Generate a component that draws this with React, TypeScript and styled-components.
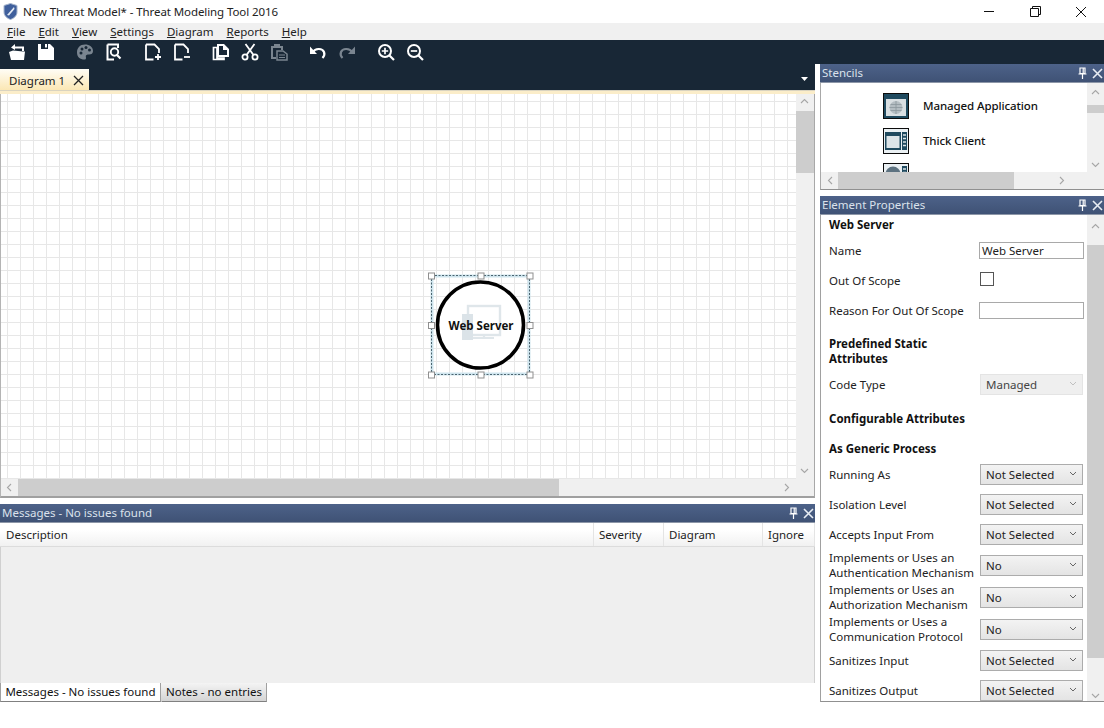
import React from "react";
import styled, { createGlobalStyle } from "styled-components";

const Global = createGlobalStyle`
  html, body { margin: 0; padding: 0; background: #fff; }
  body { font-family: "Noto Sans", "Open Sans", sans-serif; font-size: 11.5px; color: #111; }
`;

const Page = styled.div`
  width: 1104px; height: 728px; overflow: hidden; background: #fff;
  display: flex; flex-direction: column;
`;
const TitleBar = styled.div`
  height: 23px; display: flex; align-items: center; padding-left: 3px; background: #fff;
`;
const TitleText = styled.span`
  margin-left: 5px; font-size: 11.5px; letter-spacing: -0.09px; color: #222; flex: 1;
`;
const WinBtn = styled.div`
  width: 46px; height: 23px; display: flex; align-items: center; justify-content: center;
`;
const MenuBar = styled.div`
  height: 17px; background: #f0f0f0; display: flex; align-items: center; padding-left: 7px; gap: 13px;
`;
const MenuItem = styled.span`
  display: inline-block; font-size: 11.5px; color: #222;
  &::first-letter { text-decoration: underline; }
`;
const Toolbar = styled.div`
  height: 24px; background: #182736; display: flex; align-items: center; padding-left: 2px; gap: 10px;
`;
const ToolGroup = styled.div`display: flex;`;
const ToolBtn = styled.div`
  width: 29px; height: 24px; display: flex; align-items: center; justify-content: center;
`;
const Main = styled.div`
  flex: 1; display: flex; min-height: 0;
`;
const LeftCol = styled.div`
  width: 815px; display: flex; flex-direction: column; margin-right: 5px;
`;
const TabStrip = styled.div`
  height: 26px; background: #182736; display: flex; align-items: flex-end; position: relative;
`;
const DocTab = styled.div`
  width: 89px; height: 21px; box-sizing: border-box; padding: 1px 5px 0 9px;
  background: linear-gradient(#fffdf6, #fbe7b4); display: flex; align-items: center; justify-content: space-between;
  color: #222;
`;
const TabMenu = styled.div`
  position: absolute; right: 7px; top: 13px; display: flex;
`;
const CreamStrip = styled.div`
  height: 4px; background: #fbedc9; border-top: 1px solid #d9d3c0; box-sizing: border-box;
`;
const CanvasFrame = styled.div`
  height: 404px; box-sizing: border-box; border-left: 1px solid #b4b4b4; border-right: 1px solid #a8a8a8; border-bottom: 2px solid #a0a0a0;
  display: grid; grid-template-columns: 1fr 18px; grid-template-rows: 1fr 17px; background: #f0f0f0;
`;
const Canvas = styled.div`
  position: relative; overflow: hidden; background-color: #fff;
  background-image: linear-gradient(#e7e7e7 1px, transparent 1px), linear-gradient(90deg, #e7e7e7 1px, transparent 1px);
  background-size: 13px 13px; background-position: 6px 7px;
`;
const NodeBox = styled.div`
  position: absolute; left: 425px; top: 177px; width: 110px; height: 110px;
`;
const NodeLabel = styled.div`
  position: absolute; left: 0; right: 0; top: 47px; text-align: center; font-weight: 700; font-size: 11.5px; color: #111; line-height: 16px;
`;
const VTrack = styled.div<{ $thumbTop: number; $thumbHeight: number }>`
  position: relative; background: #f0f0f0;
  &::before {
    content: ""; position: absolute; left: 0; right: 0; top: ${(p) => p.$thumbTop}px; height: ${(p) => p.$thumbHeight}px; background: #cdcdcd;
  }
`;
const HTrack = styled.div<{ $thumbLeft: number; $thumbWidth: number }>`
  position: relative; background: #f0f0f0;
  &::before {
    content: ""; position: absolute; top: 0; bottom: 0; left: ${(p) => p.$thumbLeft}px; width: ${(p) => p.$thumbWidth}px; background: #cdcdcd;
  }
`;
const Arrow = styled.svg<{ $x?: number; $y?: number; $r?: number; $b?: number }>`
  position: absolute; width: 9px; height: 9px;
  ${(p) => (p.$x !== undefined ? `left:${p.$x}px;` : "")}
  ${(p) => (p.$y !== undefined ? `top:${p.$y}px;` : "")}
  ${(p) => (p.$r !== undefined ? `right:${p.$r}px;` : "")}
  ${(p) => (p.$b !== undefined ? `bottom:${p.$b}px;` : "")}
`;
const Corner = styled.div`background: #f0f0f0;`;
const PanelHeader = styled.div`
  height: 19px; flex: none; background: linear-gradient(#4d6289, #3f5275); display: flex; align-items: center;
  color: #dbe2ec; font-size: 11.5px; padding-left: 2px; border-bottom: 1px solid #8d97a8; box-sizing: border-box;
`;
const HeaderTitle = styled.span`flex: 1; padding-bottom: 2px;`;
const HeaderIcons = styled.div`display: flex; align-items: center; gap: 5px; padding-right: 1px;`;
const GapSix = styled.div`height: 6px; flex: none;`;
const Columns = styled.div`
  height: 24px; display: flex; background: linear-gradient(#fff 30%, #f1f1f1); border-bottom: 1px solid #dcdcdc; box-sizing: border-box;
`;
const Col = styled.div<{ $w?: number }>`
  ${(p) => (p.$w ? `width:${p.$w}px;` : "flex:1;")}
  box-sizing: border-box; padding-left: ${(p) => (p.$w ? 5 : 6)}px; display: flex; align-items: center; color: #222; border-right: 1px solid #e4e4e4;
`;
const MsgBody = styled.div`
  height: 136px; background: #efefef; border-left: 1px solid #d0d0d0; border-right: 1px solid #d0d0d0; box-sizing: border-box;
`;
const BottomTabs = styled.div`
  display: flex; height: 19px;
`;
const BottomTab = styled.div<{ $active?: boolean }>`
  box-sizing: border-box; height: 19px; display: flex; align-items: center; justify-content: center; padding-bottom: 2px;
  width: ${(p) => (p.$active ? 161 : 106)}px;
  background: ${(p) => (p.$active ? "#fff" : "linear-gradient(#f4f4f4, #d4d4d4)")};
  border-bottom: 1px solid #808080; border-left: 1px solid ${(p) => (p.$active ? "#a0a0a0" : "transparent")};
  border-right: 1px solid #a0a0a0; color: #111;
`;
const RightCol = styled.div`
  width: 284px; display: flex; flex-direction: column;
`;
const StencilFrame = styled.div`
  height: 107px; box-sizing: border-box; flex: none; border-left: 1px solid #a8a8a8; border-bottom: 1px solid #909090;
  display: grid; grid-template-columns: 1fr 17px; grid-template-rows: 89px 17px;
`;
const StencilList = styled.div`
  overflow: hidden; padding: 10px 0 0 62px; display: flex; flex-direction: column; gap: 9px; background: #fff;
`;
const StencilRow = styled.div`
  display: flex; align-items: center; gap: 14px; height: 26px; flex: none; font-size: 11.5px; font-weight: 500; letter-spacing: -0.1px; color: #111;
`;
const StencilName = styled.span`
  padding-bottom: 2px;
`;
const PropsFrame = styled.div`
  position: relative; height: 487px; flex: none; box-sizing: border-box; border-left: 1px solid #a0a0a0; border-bottom: 1px solid #909090;
  display: grid; grid-template-columns: 1fr 17px; overflow: hidden;
`;
const PropsBody = styled.div`
  overflow: hidden; padding-left: 8px; background: #fff;
`;
const PropsInner = styled.div`
  margin-top: -1px;
`;
const SectionTitle = styled.div<{ $h?: number; $mt?: number }>`
  height: ${(p) => p.$h ?? 22}px; margin-top: ${(p) => p.$mt ?? 8}px; display: flex; align-items: center; font-weight: 700; line-height: 15px; color: #111; width: 150px;
`;
const PropRow = styled.div<{ $h?: number; $mt?: number }>`
  height: ${(p) => p.$h ?? 30}px; margin-top: ${(p) => p.$mt ?? 0}px; display: grid; grid-template-columns: 151px 1fr; align-items: center; padding-right: 3px;
`;
const PropLabel = styled.div`
  color: #222; line-height: 15px; white-space: nowrap;
`;
const TextField = styled.div`
  width: 105px; height: 17px; box-sizing: border-box; border: 1px solid #a9a9a9; padding-left: 2px; display: flex; align-items: center; background: #fff; color: #222; margin-left: -1px;
`;
const Check = styled.div`
  width: 14px; height: 14px; box-sizing: border-box; border: 1px solid #555; background: #fff; margin: -2px 0 0 0;
`;
const Select = styled.div<{ $disabled?: boolean }>`
  width: 103px; height: 21px; box-sizing: border-box; display: flex; align-items: center; justify-content: space-between; padding: 0 5px;
  color: ${(p) => (p.$disabled ? "#444" : "#222")};
  background: ${(p) => (p.$disabled ? "#efefef" : "linear-gradient(#f3f3f3, #e4e4e4)")};
  border: 1px solid ${(p) => (p.$disabled ? "#e4e4e4" : "#acacac")};
`;

const Chevron = ({ d = "M1 6 L4.5 2.5 L8 6", c = "#a6a6a6", x, y, r, b }: { d?: string; c?: string; x?: number; y?: number; r?: number; b?: number }) => (
  <Arrow viewBox="0 0 9 9" $x={x} $y={y} $r={r} $b={b}><path d={d} fill="none" stroke={c} strokeWidth="1.1" /></Arrow>
);
const UP = "M1 6 L4.5 2.5 L8 6";
const DOWN = "M1 3 L4.5 6.5 L8 3";
const LEFT = "M6 1 L2.5 4.5 L6 8";
const RIGHT = "M3 1 L6.5 4.5 L3 8";

const W = "#fff";
const G = "#7a8590";
const D = "#182736";

const Icon = ({ children, w = 18, h = 18 }: { children: React.ReactNode; w?: number; h?: number }) => (
  <svg width={w} height={h} viewBox="0 0 18 18">{children}</svg>
);

const tools: React.ReactNode[][] = [
  [
    <Icon key="open"><path d="M7 1 L3 4.5 L7 7 V5.5 H14 V8 H16 V3.5 H7 Z" fill={W} /><path d="M1 9 L5 7.5 L15 8.5 L17 8.5 L16 17 H3 Z" fill={W} /></Icon>,
    <Icon key="save"><path d="M1 1 H4 V6 H11 V1 H13 L17 5 V17 H1 Z" fill={W} /><rect x="8" y="1" width="2" height="3.5" fill={W} /></Icon>,
  ],
  [
    <Icon key="palette"><path d="M9 1.5 C4 1.5 1 5 1 9.5 C1 14 4 16.5 8.5 16.5 C10.5 16.5 10 14.5 9.8 13.5 C9.6 12 11 11.5 13 11.5 C15.5 11.5 17 10.5 17 8 C17 4 13.5 1.5 9 1.5 Z" fill={G} /><circle cx="5" cy="10" r="1.5" fill={D} /><circle cx="6" cy="6" r="1.5" fill={D} /><circle cx="10" cy="4.6" r="1.5" fill={D} /><circle cx="13.5" cy="7" r="1.5" fill={D} /></Icon>,
    <Icon key="report"><path d="M2.5 1.5 H13 V5 M2.5 1.5 V16.5 H9" fill="none" stroke={W} strokeWidth="2" /><circle cx="9.5" cy="9" r="3.7" fill="none" stroke={W} strokeWidth="1.9" /><path d="M12 12 L15.5 15.5" stroke={W} strokeWidth="2.2" /></Icon>,
  ],
  [
    <Icon key="add"><path d="M2 1.5 H10.5 L15 6 V10 M2 1.5 V16.5 H9.5" fill="none" stroke={W} strokeWidth="1.8" /><path d="M14 11 V17 M11 14 H17" stroke={W} strokeWidth="1.8" /></Icon>,
    <Icon key="remove"><path d="M2 1.5 H10.5 L15 6 V10 M2 1.5 V16.5 H9.5" fill="none" stroke={W} strokeWidth="1.8" /><path d="M11 14 H17" stroke={W} strokeWidth="1.8" /></Icon>,
  ],
  [
    <Icon key="copy"><path d="M1.5 4.5 H5 V15 H12 V16.5 H1.5 Z" fill="none" stroke={W} strokeWidth="1.7" /><path d="M5 1 H12 L17 6 V14 H5 Z M7 3 V12 H15 V7 H11 V3 Z" fill={W} fillRule="evenodd" /></Icon>,
    <Icon key="cut"><circle cx="4" cy="14" r="2.6" fill="none" stroke={W} strokeWidth="1.8" /><circle cx="14" cy="14" r="2.6" fill="none" stroke={W} strokeWidth="1.8" /><path d="M5.5 12 L13.5 1 M12.5 12 L4.5 1" stroke={W} strokeWidth="1.8" /></Icon>,
    <Icon key="paste"><path d="M1 3 H4 V1 H10 V3 H13 V7 H11 V5 H3 V14 H6 V16 H1 Z" fill={G} /><path d="M7 8 H13 L17 11 V17 H7 Z" fill="none" stroke={G} strokeWidth="1.5" /><path d="M9 12 H15 M9 14.5 H15" stroke={G} strokeWidth="1.2" /></Icon>,
  ],
  [
    <Icon key="undo"><path d="M4 9 C6 5.5 13 4.5 15 9 C16 11.5 15 13.5 13.5 15" fill="none" stroke={W} strokeWidth="2.2" /><path d="M1 3.5 V11 H8 Z" fill={W} /></Icon>,
    <Icon key="redo"><path d="M14 9 C12 5.5 5 4.5 3 9 C2 11.5 3 13.5 4.5 15" fill="none" stroke={G} strokeWidth="2.2" /><path d="M17 3.5 V11 H10 Z" fill={G} /></Icon>,
  ],
  [
    <Icon key="zin"><circle cx="8" cy="8" r="6" fill="none" stroke={W} strokeWidth="2" /><path d="M12.5 12.5 L17 17" stroke={W} strokeWidth="2.2" /><path d="M8 4.8 V11.2 M4.8 8 H11.2" stroke={W} strokeWidth="1.7" /></Icon>,
    <Icon key="zout"><circle cx="8" cy="8" r="6" fill="none" stroke={W} strokeWidth="2" /><path d="M12.5 12.5 L17 17" stroke={W} strokeWidth="2.2" /><path d="M4.8 8 H11.2" stroke={W} strokeWidth="1.7" /></Icon>,
  ],
];

const PanelIcons = () => (
  <HeaderIcons>
    <svg width="9" height="12" viewBox="0 0 9 12"><path d="M2 1 H7 V6.5 H2 Z M5.2 1 V6.5 M0.5 7 H8.5 M4.5 7 V12" fill="none" stroke="#fff" strokeWidth="1.2" /></svg>
    <svg width="11" height="11" viewBox="0 0 11 11"><path d="M1 1 L10 10 M10 1 L1 10" stroke="#e8edf4" strokeWidth="1.6" /></svg>
  </HeaderIcons>
);

const SelectChevron = ({ c = "#666" }: { c?: string }) => (
  <svg width="8" height="6" viewBox="0 0 8 6"><path d="M1 1 L4 4 L7 1" fill="none" stroke={c} strokeWidth="1" /></svg>
);

const Globe = ({ cx, cy, r }: { cx: number; cy: number; r: number }) => (
  <g>
    <circle cx={cx} cy={cy} r={r} fill="#b4bdc2" />
    <path d={`M${cx - r} ${cy} H${cx + r} M${cx - r + 1} ${cy - 3} H${cx + r - 1} M${cx - r + 1} ${cy + 3} H${cx + r - 1} M${cx} ${cy - r} V${cy + r}`} stroke="#8b979d" strokeWidth="0.8" fill="none" />
  </g>
);

const StencilIcon = ({ kind }: { kind: number }) => (
  <svg width="26" height="26" viewBox="0 0 26 26">
    <rect x="0.5" y="0.5" width="25" height="25" fill={kind === 0 ? "#1f4a5f" : "#eaf0f3"} stroke="#0c0c0c" />
    {kind === 0 && (
      <g>
        <rect x="3" y="6" width="20" height="17" fill="#d9dfe2" />
        <Globe cx={13} cy={14.5} r={6.5} />
      </g>
    )}
    {kind === 1 && (
      <g>
        <rect x="2" y="4" width="16" height="18" fill="#1f4a5f" />
        <rect x="3.5" y="8" width="13" height="12" fill="#dce4e8" />
        <rect x="19" y="4" width="5" height="18" fill="#1f4a5f" />
        <path d="M20 7 H23 M20 10.5 H23 M20 14 H23 M20 17.5 H23" stroke="#dce4e8" strokeWidth="1.6" />
      </g>
    )}
    {kind === 2 && (
      <g>
        <circle cx="10" cy="11" r="7.5" fill="#5d7280" />
        <rect x="19" y="3" width="5" height="20" fill="#1f4a5f" />
        <path d="M20 6 H23 M20 9.5 H23" stroke="#dce4e8" strokeWidth="1.6" />
      </g>
    )}
  </svg>
);

type Row = { label: string[]; value: string; h?: number };
const selects: Row[] = [
  { label: ["Running As"], value: "Not Selected" },
  { label: ["Isolation Level"], value: "Not Selected" },
  { label: ["Accepts Input From"], value: "Not Selected" },
  { label: ["Implements or Uses an", "Authentication Mechanism"], value: "No", h: 32 },
  { label: ["Implements or Uses an", "Authorization Mechanism"], value: "No", h: 32 },
  { label: ["Implements or Uses a", "Communication Protocol"], value: "No", h: 32 },
  { label: ["Sanitizes Input"], value: "Not Selected" },
  { label: ["Sanitizes Output"], value: "Not Selected" },
];

const menus = ["File", "Edit", "View", "Settings", "Diagram", "Reports", "Help"];

export default function App() {
  return (
    <Page>
      <Global />
      <TitleBar>
        <svg width="15" height="17" viewBox="0 0 15 17">
          <path d="M7.5 0.5 L14 2.5 V9 C14 13 10.5 15.5 7.5 16.5 C4.5 15.5 1 13 1 9 V2.5 Z" fill="#3f5f9c" stroke="#a7b6cd" />
          <path d="M4 12 L11 4 L11.5 6 L6 12.5 Z" fill="#e4ebf4" />
        </svg>
        <TitleText>New Threat Model* - Threat Modeling Tool 2016</TitleText>
        <WinBtn><svg width="11" height="11" viewBox="0 0 11 11"><path d="M0 5.5 H10" stroke="#111" /></svg></WinBtn>
        <WinBtn><svg width="11" height="11" viewBox="0 0 11 11"><path d="M0.5 2.5 H8.5 V10.5 H0.5 Z M2.5 2.5 V0.5 H10.5 V8.5 H8.5" fill="none" stroke="#111" /></svg></WinBtn>
        <WinBtn><svg width="12" height="12" viewBox="0 0 12 12"><path d="M1 1 L11 11 M11 1 L1 11" stroke="#111" /></svg></WinBtn>
      </TitleBar>
      <MenuBar>
        {menus.map((m) => <MenuItem key={m}>{m}</MenuItem>)}
      </MenuBar>
      <Toolbar>
        {tools.map((group, i) => (
          <ToolGroup key={i}>
            {group.map((t, j) => <ToolBtn key={j}>{t}</ToolBtn>)}
          </ToolGroup>
        ))}
      </Toolbar>
      <Main>
        <LeftCol>
          <TabStrip>
            <DocTab>
              Diagram 1
              <svg width="11" height="11" viewBox="0 0 11 11"><path d="M1 1 L10 10 M10 1 L1 10" stroke="#222" strokeWidth="1.3" /></svg>
            </DocTab>
            <TabMenu>
              <svg width="7" height="4" viewBox="0 0 7 4"><path d="M0 0 H7 L3.5 4 Z" fill="#fff" /></svg>
            </TabMenu>
          </TabStrip>
          <CreamStrip />
          <CanvasFrame>
            <Canvas>
              <NodeBox>
                <svg width="110" height="110" viewBox="0 0 110 110">
                  <rect x="6" y="5" width="97" height="98" fill="none" stroke="#cfe5ee" strokeWidth="3" />
                  <rect x="5.5" y="4.5" width="98" height="99" fill="none" stroke="#4a6470" strokeDasharray="2 1.5" />
                  <circle cx="54.5" cy="54" r="43" fill="#fff" stroke="#000" strokeWidth="3.6" />
                  <g>
                    <rect x="42" y="35" width="32" height="29" fill="#fff" stroke="#dfe6ea" strokeWidth="2.4" />
                    <rect x="36" y="43" width="11" height="26" fill="#dbe3e8" />
                    <path d="M47 67 H68 M58 64 V67" stroke="#dfe6ea" strokeWidth="2.2" />
                  </g>
                  {[5, 54.5, 103.5].flatMap((x) =>
                    [4.5, 54, 103.5]
                      .filter((y) => !(x === 54.5 && y === 54))
                      .map((y) => (
                        <rect key={`${x}-${y}`} x={x - 2.5} y={y - 2.5} width="6" height="6" fill="#fff" stroke="#8f8f8f" />
                      ))
                  )}
                </svg>
                <NodeLabel>Web Server</NodeLabel>
              </NodeBox>
            </Canvas>
            <VTrack $thumbTop={17} $thumbHeight={62}>
              <Chevron d={UP} x={4} y={3} />
              <Chevron d={DOWN} x={4} b={4} />
            </VTrack>
            <HTrack $thumbLeft={17} $thumbWidth={541}>
              <Chevron d={LEFT} x={4} y={4} />
              <Chevron d={RIGHT} r={5} y={4} />
            </HTrack>
            <Corner />
          </CanvasFrame>
          <GapSix />
          <PanelHeader>
            <HeaderTitle>Messages - No issues found</HeaderTitle>
            <PanelIcons />
          </PanelHeader>
          <Columns>
            <Col>Description</Col>
            <Col $w={70}>Severity</Col>
            <Col $w={99}>Diagram</Col>
            <Col $w={52}>Ignore</Col>
          </Columns>
          <MsgBody />
          <BottomTabs>
            <BottomTab $active>Messages - No issues found</BottomTab>
            <BottomTab>Notes - no entries</BottomTab>
          </BottomTabs>
        </LeftCol>
        <RightCol>
          <PanelHeader>
            <HeaderTitle>Stencils</HeaderTitle>
            <PanelIcons />
          </PanelHeader>
          <StencilFrame>
            <StencilList>
              <StencilRow><StencilIcon kind={0} /><StencilName>Managed Application</StencilName></StencilRow>
              <StencilRow><StencilIcon kind={1} /><StencilName>Thick Client</StencilName></StencilRow>
              <StencilRow><StencilIcon kind={2} /><StencilName>Browser Client</StencilName></StencilRow>
            </StencilList>
            <VTrack $thumbTop={22} $thumbHeight={8}>
              <Chevron d={UP} x={4} y={5} />
              <Chevron d={DOWN} x={4} b={3} />
            </VTrack>
            <HTrack $thumbLeft={17} $thumbWidth={176}>
              <Chevron d={LEFT} x={5} y={4} />
              <Chevron d={RIGHT} r={21} y={4} />
            </HTrack>
            <Corner />
          </StencilFrame>
          <GapSix />
          <PanelHeader>
            <HeaderTitle>Element Properties</HeaderTitle>
            <PanelIcons />
          </PanelHeader>
          <PropsFrame>
            <PropsBody>
              <PropsInner>
                <SectionTitle $h={20} $mt={0}>Web Server</SectionTitle>
                <PropRow $mt={1}><PropLabel>Name</PropLabel><TextField>Web Server</TextField></PropRow>
                <PropRow><PropLabel>Out Of Scope</PropLabel><Check /></PropRow>
                <PropRow><PropLabel>Reason For Out Of Scope</PropLabel><TextField /></PropRow>
                <SectionTitle $h={30} $mt={11}>Predefined Static Attributes</SectionTitle>
                <PropRow $mt={3}>
                  <PropLabel>Code Type</PropLabel>
                  <Select $disabled>Managed<SelectChevron c="#c0c0c0" /></Select>
                </PropRow>
                <SectionTitle>Configurable Attributes</SectionTitle>
                <SectionTitle>As Generic Process</SectionTitle>
                {selects.map((r) => (
                  <PropRow key={r.label.join(" ")} $h={r.h}>
                    <PropLabel>{r.label.map((l) => <div key={l}>{l}</div>)}</PropLabel>
                    <Select>{r.value}<SelectChevron /></Select>
                  </PropRow>
                ))}
              </PropsInner>
            </PropsBody>
            <VTrack $thumbTop={30} $thumbHeight={413}>
              <Chevron d={UP} x={4} y={7} />
              <Chevron d={DOWN} x={4} b={1} />
            </VTrack>
          </PropsFrame>
        </RightCol>
      </Main>
    </Page>
  );
}
